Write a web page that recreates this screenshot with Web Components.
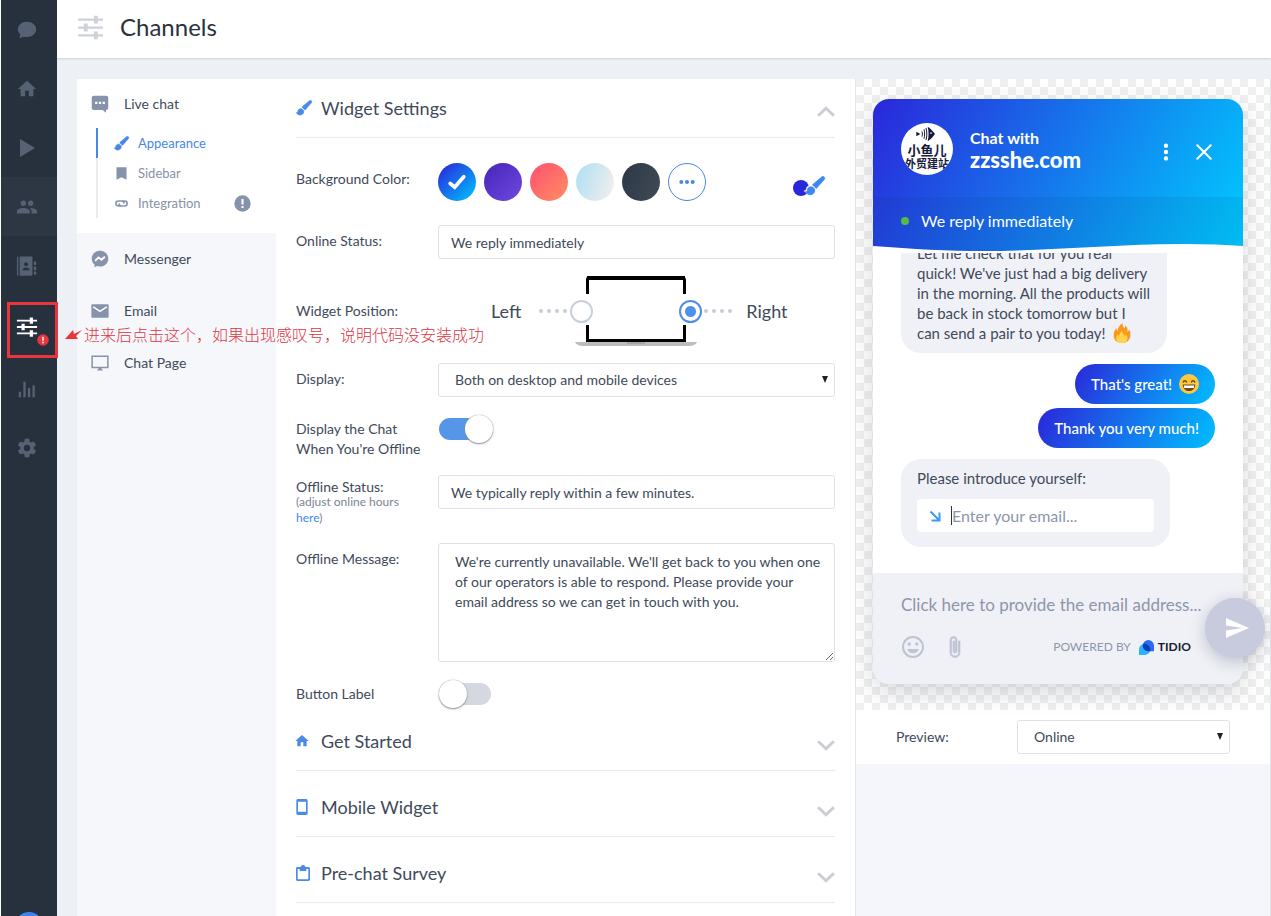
<!DOCTYPE html>
<html lang="en">
<head>
<meta charset="utf-8">
<title>Channels</title>
<style>
  html, body {
    margin: 0;
    height: 100%;
  }
  body {
    font-family: Lato, "Noto Sans CJK SC", sans-serif;
    font-size: 14px;
    line-height: 20px;
    color: #404a5a;
    background: #fff;
    overflow: hidden;
  }
</style>
</head>
<body>
<channels-app></channels-app>

<script>
const ICONS = {
  chat: '<path d="M12 3C6.500 3 2 6.700 2 11.300c0 2.200 1 4.200 2.800 5.700L3.500 21l5-1.700c1.100.3 2.300.4 3.500.4 5.500 0 10-3.700 10-8.400S17.500 3 12 3z"/>',
  home: '<path d="M10 20v-6h4v6h5v-8h3L12 3 2 12h3v8z"/>',
  play: '<path d="M5 3v18l15-9z"/>',
  people: '<path d="M16 11c1.660 0 3-1.340 3-3s-1.340-3-3-3-3 1.340-3 3 1.340 3 3 3zm-8 0c1.660 0 3-1.340 3-3S9.660 5 8 5 5 6.340 5 8s1.340 3 3 3zm0 2c-2.330 0-7 1.170-7 3.500V19h14v-2.500C15 14.170 10.330 13 8 13zm8 0c-.29 0-.62.02-.97.05C16.190 13.890 17 15.020 17 16.500V19h6v-2.500c0-2.330-4.670-3.500-7-3.500z"/>',
  contacts: '<path d="M1 3c0-1 .5-1.500 1.500-1.500V22.500C1.500 22.500 1 22 1 21zM4 1.500h12.500c1 0 1.500.5 1.500 1.500v18c0 1-.5 1.500-1.500 1.500H4zM19.500 7H22v4h-2.500zM19.500 12.500H22v4h-2.500zM19.500 18H22v3.500h-2.500z"/><path fill="var(--hole)" d="M11 8a2.200 2.200 0 1 1 0 4.400A2.200 2.200 0 0 1 11 8zm-4 8.500c0-2 2-3 4-3s4 1 4 3z"/>',
  sliders: '<path d="M1 4h22v2H1zM1 11h22v2H1zM1 18h22v2H1z"/><path d="M15 1.500h3.500v7H15zM6 8.500h3.500v7H6zM15 15.500h3.500v7H15z"/>',
  stats: '<path d="M3 15h2.500v6H3zM8 4h2.500v17H8zM13 11h2.500v10H13zM18 8h2.500v13H18z"/>',
  gear: '<path d="M19.430 12.980c.04-.32.07-.64.07-.98s-.03-.66-.07-.98l2.110-1.650c.19-.15.24-.42.12-.64l-2-3.460c-.12-.22-.39-.3-.61-.22l-2.490 1c-.52-.4-1.080-.73-1.690-.98l-.38-2.650C14.460 2.180 14.250 2 14 2h-4c-.25 0-.46.18-.49.42l-.38 2.650c-.61.25-1.170.59-1.690.98l-2.490-1c-.23-.09-.49 0-.61.22l-2 3.460c-.13.22-.07.49.12.64l2.110 1.650c-.04.32-.07.65-.07.98s.03.66.07.98l-2.110 1.650c-.19.15-.24.42-.12.64l2 3.460c.12.22.39.3.61.22l2.490-1c.52.4 1.080.73 1.690.98l.38 2.650c.03.24.24.42.49.42h4c.25 0 .46-.18.49-.42l.38-2.650c.61-.25 1.170-.59 1.690-.98l2.490 1c.23.09.49 0 .61-.22l2-3.460c.12-.22.07-.49-.12-.64zM12 15.500A3.500 3.500 0 1 1 12 8.500a3.500 3.500 0 0 1 0 7z"/>',
  message: '<path d="M4 1h16c2 0 3 1 3 3v13c0 2-1 3-3 3v3.500L15.500 20H4c-2 0-3-1-3-3V4c0-2 1-3 3-3z"/><path fill="#fff" d="M5.500 9h3v3h-3zM10.500 9h3v3h-3zM15.500 9h3v3h-3z"/>',
  brush: '<path stroke="currentColor" d="M7 13c-2.200 0-3.800 1.500-4 3.500-.1 1.600-1.200 2.500-2.500 2.500 1.200 2 3.300 3.500 5.700 3.500 3.200 0 5.500-2.300 5.500-5.300 0-2.300-2.400-4.200-4.700-4.200zM23 1.200c-.9-.8-2-.7-2.900 0L9 10.500l4.500 4.500L23.200 4c.6-.8.6-2-.2-2.800z"/>',
  bookmark: '<path d="M4 2h16v20l-8-4-8 4z"/>',
  link: '<g fill="none" stroke="currentColor" stroke-width="2.600"><path d="M11 16H7a4 4 0 0 1 0-8h5a4 4 0 0 1 4 4M13 8h4a4 4 0 0 1 0 8h-5a4 4 0 0 1-4-4"/></g>',
  bang: '<circle cx="12" cy="12" r="11.500"/><path fill="#fff" d="M10.500 5.500h3v8h-3zM10.500 15.500h3v3h-3z"/>',
  messenger: '<path d="M12 1C5.700 1 1 5.600 1 11.500c0 3.200 1.400 6 3.700 7.900V23l3.500-1.600c1.200.4 2.500.6 3.800.6 6.300 0 11-4.600 11-10.500S18.300 1 12 1z"/><path fill="none" stroke="#fff" stroke-width="2.500" d="M5.500 14.500l4.500-4.500 4 3 4.500-4"/>',
  mail: '<path d="M2 3h20c1 0 1.500.5 1.500 1.500v15c0 1-.5 1.500-1.500 1.500H2c-1 0-1.500-.5-1.500-1.500v-15C.5 3.500 1 3 2 3z"/><path fill="none" stroke="#fff" stroke-width="2" d="M3 6.500l9 6 9-6"/>',
  monitor: '<path fill="none" stroke="currentColor" stroke-width="2" d="M1.500 3h21v15h-21z"/><path d="M11 18h2l3 4H8z"/>',
  phone: '<path fill-rule="evenodd" d="M6 0h12c1.500 0 2.500 1 2.500 2.500v19c0 1.500-1 2.500-2.500 2.500H6c-1.500 0-2.500-1-2.500-2.500v-19C3.500 1 4.500 0 6 0zm0 4v15h12V4z"/>',
  clipboard: '<path fill-rule="evenodd" d="M20 3h-4.200C15.400 1.200 13.800 0 12 0S8.600 1.200 8.200 3H4C2.500 3 1.500 4 1.500 5.500v16C1.500 23 2.500 24 4 24h16c1.500 0 2.500-1 2.500-2.500v-16C22.500 4 21.500 3 20 3zM4 6h3v3h10V6h3v15.500H4z"/>',
  check: '<path fill="none" stroke="currentColor" stroke-width="5" stroke-linecap="round" d="M3 14l6 5L21 5"/>',
  dots: '<circle cx="3.500" cy="12" r="3"/><circle cx="12" cy="12" r="3"/><circle cx="20.500" cy="12" r="3"/>',
  more: '<circle cx="12" cy="3.500" r="2.900"/><circle cx="12" cy="12" r="2.900"/><circle cx="12" cy="20.500" r="2.900"/>',
  close: '<path fill="none" stroke="currentColor" stroke-width="2.800" stroke-linecap="round" d="M3 3l18 18M21 3L3 21"/>',
  up: '<path fill="none" stroke="currentColor" stroke-width="4" d="M1.500 17L12 7l10.500 10"/>',
  down: '<path fill="none" stroke="currentColor" stroke-width="4" d="M1.500 7L12 17 22.500 7"/>',
  corner: '<path fill="none" stroke="currentColor" stroke-width="4" d="M3 3l17 17M21 5v16H5"/>',
  smile: '<path d="M12 1C5.900 1 1 5.900 1 12s4.900 11 11 11 11-4.900 11-11S18.100 1 12 1zm0 20a9 9 0 1 1 0-18 9 9 0 0 1 0 18z"/><circle cx="8.200" cy="9" r="1.700"/><circle cx="15.800" cy="9" r="1.700"/><path d="M6 14c1 2.800 3.200 4.300 6 4.300s5-1.500 6-4.300z"/>',
  clip: '<path stroke="currentColor" stroke-width=".7" d="M17 6v11.500a5 5 0 0 1-10 0V5a3.500 3.500 0 0 1 7 0v11a2 2 0 0 1-4 0V6h1.500v10a.6.600 0 0 0 1 0V5a2 2 0 0 0-4 0v12.500a3.500 3.500 0 0 0 7 0V6z"/>',
  send: '<path d="M1 2l23 10L1 22v-7.500L17 12 1 9.500z"/>',
  tidio: '<path fill="#2bb3ff" d="M0 24V15a9 9 0 0 1 18 0 9 9 0 0 1-9 9z"/><path fill="#2f6bf0" d="M6 9a9 9 0 0 1 18 0v9h-9a9 9 0 0 1-9-9z"/><path fill="#0a3fc0" d="M6.500 6.400A9 9 0 0 1 18 15v3h-3A9 9 0 0 1 6.500 6.400z"/>',
  fire: '<path fill="#f79a1c" d="M12 24C6 24 2 20.500 2 15c0-4 1.500-7 3-9 .2 2 .8 3 1.800 3.500C7 6 9 2.500 12.500 0c-.3 3 1.200 4.500 2.500 6.500.6-.8.8-2 .5-3.500C19 5 19 8 18.500 10.500c1.200-.6 1.800-1.500 2-3C22 10 22.500 13 22 16c-.8 5-4.500 8-10 8z"/><path fill="#ffd34d" d="M12 24c-4 0-7-2-7-6 0-2 .8-3.500 2-4.500.2 1 .6 1.700 1.500 2 .2-2.500 1.500-4.500 3.500-6 0 2.500 2.500 3.500 3 6 .8-.4 1.200-1 1.500-2 1.300 1.200 2 2.600 2 4.500 0 4-2.800 6-6.500 6z"/>',
  grin: '<circle cx="12" cy="12" r="12" fill="#ffc83d"/><path fill="none" stroke="#6a4a1e" stroke-width="1.800" stroke-linecap="round" d="M5 9.500c.7-2 3.300-2 4 0M15 9.500c.7-2 3.300-2 4 0"/><path fill="#6a4a1e" d="M4.500 12.500h15c0 4.500-3.300 8-7.500 8s-7.500-3.500-7.500-8z"/><path fill="#fff" d="M6 13.800h12v3H6z"/>',
  fish: '<path d="M13 1c3.500 2 7.500 6 11 11-3.500 5-7.500 9-11 11 1.800-7 1.800-15 0-22z"/><circle cx="18" cy="10.500" r="1.300" fill="#fff"/><path fill="none" stroke="currentColor" stroke-width="1.500" d="M10.500 3c1.700 6 1.700 12 0 18M7.500 5c1.300 5 1.300 9 0 14M4.500 8c.8 3 .8 5 0 8"/><path d="M-4 8.500L2 12l-6 3.500z"/>'
};

// draws one glyph out of ICONS, sized with --size
class UiIcon extends HTMLElement {
  constructor() {
    super();
    this.attachShadow({ mode: "open" });
  }

  connectedCallback() {
    this.shadowRoot.innerHTML = `
      <style>
        :host {
          display: inline-flex;
          flex: none;
          width: var(--size, 18px);
          height: var(--size, 18px);
        }
        svg { width: 100%; height: 100%; overflow: visible; }
      </style>
      <svg viewBox="0 0 24 24" fill="currentColor" aria-hidden="true">${ICONS[this.getAttribute("name")]}</svg>`;
  }
}

class AppRail extends HTMLElement {
  constructor() {
    super();
    this.attachShadow({ mode: "open" });
  }

  connectedCallback() {
    const items = [
      ["chat", "Chat"],
      ["home", "Home"],
      ["play", "Automation"],
      ["people", "Visitors"],
      ["contacts", "Contacts"],
      ["sliders", "Channels"],
      ["stats", "Analytics"],
      ["gear", "Settings"],
    ];
    this.shadowRoot.innerHTML = `
      <style>
        :host {
          position: relative;
          z-index: 1;
          display: flex;
          flex-direction: column;
          align-items: center;
          width: 56px;
          margin-left: 1px;
          background: #27313e;
          color: #566273;
          --hole: #27313e;
        }
        a {
          display: flex;
          flex: none;
          align-items: center;
          justify-content: center;
          width: 100%;
          height: 59px;
          box-sizing: border-box;
          padding-right: 5px;
          color: inherit;
          --size: 22px;
        }
        a.play { --size: 24px; }
        a.people { background: #2d3744; }
        a.sliders {
          position: relative;
          height: 64px;
          color: #fff;
        }
        .alert {
          position: absolute;
          left: 36px;
          top: 39px;
          color: #e8363c;
          --size: 12px;
        }
        .me {
          width: 28px;
          height: 28px;
          margin: auto 0 -24px;
          border: 0;
          border-radius: 50%;
          background: #3d84f0;
          flex: none;
        }
      </style>
      ${items
        .map(
          ([icon, label]) =>
            `<a href="#${icon}" class="${icon}" aria-label="${label}"><ui-icon name="${icon}"></ui-icon>${
              icon === "sliders" ? '<ui-icon class="alert" name="bang"></ui-icon>' : ""
            }</a>`,
        )
        .join("")}
      <button class="me" aria-label="Account"></button>`;
  }
}

class PageHeader extends HTMLElement {
  constructor() {
    super();
    this.attachShadow({ mode: "open" });
    this.shadowRoot.innerHTML = `
      <style>
        :host {
          display: flex;
          align-items: center;
          gap: 16px;
          height: 58px;
          box-sizing: border-box;
          padding: 0 20px 4px;
          background: #fff;
          box-shadow: 0 1px 2px #ccd1d9;
          color: #2b323c;
        }
        ui-icon { color: #cdd1d8; --size: 27px; }
        h1 { margin: 0; font-size: 24px; line-height: 30px; font-weight: 400; }
      </style>
      <ui-icon name="sliders"></ui-icon>
      <h1><slot></slot></h1>`;
  }
}

class ChannelNav extends HTMLElement {
  constructor() {
    super();
    this.attachShadow({ mode: "open" });
    this.shadowRoot.innerHTML = `
      <style>
        :host {
          display: block;
          background: #f5f7fb;
        }
        a {
          display: flex;
          align-items: center;
          gap: 15px;
          height: 52px;
          padding-left: 14px;
          color: #404a5a;
          text-decoration: none;
        }
        a > ui-icon { color: #8792ab; }
        .group { background: #fff; padding-bottom: 15px; }
        .group > a { height: 49px; }
        .sub { margin-left: 19px; }
        .sub a {
          height: 30px;
          gap: 9px;
          padding: 0 25px 0 16px;
          border-left: 2px solid #e9ebef;
          color: #8792a6;
          font-size: 13px;
          --size: 15px;
        }
        .sub a.on { border-color: #4a86e8; color: #4a86e8; }
        .sub a.on ui-icon { color: inherit; }
        .sub .warn { margin-left: auto; --size: 17px; }
      </style>
      <div class="group">
        <a href="#live"><ui-icon name="message"></ui-icon>Live chat</a>
        <div class="sub">
          <a class="on" href="#appearance"><ui-icon name="brush"></ui-icon>Appearance</a>
          <a href="#sidebar"><ui-icon name="bookmark"></ui-icon>Sidebar</a>
          <a href="#integration"><ui-icon name="link"></ui-icon>Integration<ui-icon class="warn" name="bang"></ui-icon></a>
        </div>
      </div>
      <a href="#messenger"><ui-icon name="messenger"></ui-icon>Messenger</a>
      <a href="#email"><ui-icon name="mail"></ui-icon>Email</a>
      <a href="#page"><ui-icon name="monitor"></ui-icon>Chat Page</a>`;
  }
}

class SettingsSection extends HTMLElement {
  constructor() {
    super();
    this.attachShadow({ mode: "open" });
  }

  connectedCallback() {
    const open = this.hasAttribute("open");
    this.shadowRoot.innerHTML = `
      <style>
        :host { display: block; margin-bottom: 7px; }
        :host([open]) { margin-bottom: 0; }
        h2 { margin: 0; font: inherit; }
        button {
          display: flex;
          align-items: center;
          width: 100%;
          height: 59px;
          padding: 0;
          border: 0;
          border-bottom: 1px solid #e9eaed;
          background: none;
          color: #404a5a;
          font: inherit;
          font-size: 18px;
          text-align: left;
        }
        .icon { margin-right: 9px; color: #4a8ae8; --size: 16px; }
        .icon[name="home"], .icon[name="phone"] { margin: 0 11px 0 -2px; }
        .icon[name="clipboard"] { margin: 0 10px 0 -1px; }
        .arrow { margin: 7px 0 0 auto; color: #cbcdd4; --size: 18px; }
      </style>
      <h2><button aria-expanded="${open}">
        <ui-icon class="icon" name="${this.getAttribute("icon")}"></ui-icon>
        ${this.getAttribute("heading")}
        <ui-icon class="arrow" name="${open ? "up" : "down"}"></ui-icon>
      </button></h2>
      <slot></slot>`;
  }
}

class FormRow extends HTMLElement {
  constructor() {
    super();
    this.attachShadow({ mode: "open" });
    this.shadowRoot.innerHTML = `
      <style>
        :host {
          display: grid;
          grid-template-columns: 126px minmax(0, 1fr);
          column-gap: 16px;
          align-items: start;
        }
        :host([center]) { align-items: center; }
        .label { padding-top: 6px; }
        :host([center]) .label { padding: 0; }
        :host([hint]) .label { padding-top: 2px; }
      </style>
      <div class="label"><slot name="label"></slot></div>
      <slot></slot>`;
  }
}

const FIELD_CSS = `
  input[type="text"], textarea, select {
    box-sizing: border-box;
    width: 100%;
    margin: 0;
    border: 1px solid #dfe1e6;
    border-radius: 3px;
    background: #fff;
    color: #404a5a;
    font: inherit;
  }
  input[type="text"] { height: 34px; padding: 0 12px; }
  select { height: 34px; padding: 0 16px; appearance: none; }
  .select { display: grid; align-items: center; }
  .select > * { grid-area: 1 / 1; }
  .select svg { justify-self: end; margin-right: 6px; pointer-events: none; }`;

class WidgetSettings extends HTMLElement {
  constructor() {
    super();
    this.attachShadow({ mode: "open" });
  }

  connectedCallback() {
    const colors = [
      ["Blue", "linear-gradient(135deg, #2a27da 5%, #00bfff 95%)"],
      ["Purple", "linear-gradient(135deg, #4425b8, #7048e0)"],
      ["Coral", "linear-gradient(135deg, #ff4f72, #ff8f60)"],
      ["Light", "linear-gradient(110deg, #abdff5, #f6efed)"],
      ["Dark", "linear-gradient(110deg, #2c3846, #414b57)"],
    ];
    this.shadowRoot.innerHTML = `
      <style>
        :host { display: block; padding: 0 20px; background: #fff; }
        ${FIELD_CSS}
        .body {
          display: flex;
          flex-direction: column;
          gap: 16px;
          padding-top: 25px;
        }
        .colors {
          display: flex;
          align-items: center;
          gap: 8px;
          padding-bottom: 8px;
        }
        .colors button {
          width: 38px;
          height: 38px;
          padding: 0;
          border: 0;
          border-radius: 50%;
          color: #fff;
          display: flex;
          align-items: center;
          justify-content: center;
        }
        .colors .more { border: 1px solid #4a86e8; background: none; color: #4a86e8; --size: 16px; }
        .colors .custom {
          width: auto;
          height: 22px;
          margin: 8px 10px 0 auto;
          border-radius: 0;
          background: none;
          color: #3f87f0;
          --size: 20px;
        }
        .custom::before {
          content: "";
          width: 16px;
          height: 16px;
          margin: 3px -4px 0 0;
          border-radius: 50%;
          background: #2a27da;
        }
        .custom ui-icon { filter: drop-shadow(-1px -1px 0 #fff); }
        .position {
          display: flex;
          align-items: center;
          height: 72px;
          padding-left: 53px;
          font-size: 18px;
        }
        .position label { display: flex; align-items: center; }
        .position label svg { margin: 0 3px 0 18px; }
        .position label:last-child svg { margin: 0 14px 0 2px; }
        .laptop { margin: 0 -18px; }
        input[type="radio"] {
          appearance: none;
          position: relative;
          z-index: 1;
          width: 23px;
          height: 23px;
          margin: 0;
          border: 2px solid #c9cfd8;
          border-radius: 50%;
          background: #fff;
        }
        input[type="radio"]:checked {
          border-color: #4f8ce8;
          background: radial-gradient(circle, #4f90ea 5px, #fff 6px);
        }
        .switch {
          appearance: none;
          display: flex;
          align-items: center;
          width: 52px;
          height: 22px;
          margin: 5px 0 5px 1px;
          border-radius: 11px;
          background: #d5d8e1;
        }
        .switch::before {
          content: "";
          width: 28px;
          height: 28px;
          border-radius: 50%;
          background: #fff;
          box-shadow: 0 1px 2px #888c96, 0 0 1px #888c96;
          flex: none;
        }
        .switch:checked { background: #5596e8; }
        .switch:checked::before { margin-left: 26px; }
        textarea {
          display: block;
          height: 119px;
          padding: 8px 10px 8px 16px;
        }
        small { display: block; font-size: 12px; line-height: 16px; color: #7b8494; margin: -3px 0 1px; }
        small a { color: #3f87f0; text-decoration: none; }
        .last { height: 34px; }
      </style>
      <settings-section open icon="brush" heading="Widget Settings">
        <div class="body">
          <form-row>
            <span slot="label">Background Color:</span>
            <div class="colors">
              ${colors
                .map(
                  ([name, fill], i) =>
                    `<button aria-label="${name}" style="background: ${fill}">${i ? "" : '<ui-icon name="check"></ui-icon>'}</button>`,
                )
                .join("")}
              <button class="more" aria-label="More colors"><ui-icon name="dots"></ui-icon></button>
              <button class="custom" aria-label="Custom color"><ui-icon name="brush"></ui-icon></button>
            </div>
          </form-row>
          <form-row>
            <label slot="label" for="online">Online Status:</label>
            <input id="online" type="text" value="We reply immediately">
          </form-row>
          <form-row center>
            <span slot="label">Widget Position:</span>
            <div class="position">
              <label>Left
                <svg width="28" height="4" fill="#c9cdd6"><circle cx="2" cy="2" r="2"/><circle cx="10" cy="2" r="2"/><circle cx="18" cy="2" r="2"/><circle cx="26" cy="2" r="2"/></svg>
                <input type="radio" name="side">
              </label>
              <svg class="laptop" width="122" height="72" aria-hidden="true">
                <path d="M12.500 19V4.500Q12.500 3 14 3H107Q109.500 3 109.500 5V19M12.500 50V65.500H109.500V50" fill="none" stroke="#000" stroke-width="3"/>
                <path d="M12 3H110" stroke="#000" stroke-width="4"/>
                <path d="M0 67H122Q120 71 114 71H8Q2 71 0 67Z" fill="#bcbcbe"/>
                <path d="M52 67H70V69H52Z" fill="#a4a4a7"/>
              </svg>
              <label><input type="radio" name="side" checked>
                <svg width="28" height="4" fill="#c9cdd6"><circle cx="2" cy="2" r="2"/><circle cx="10" cy="2" r="2"/><circle cx="18" cy="2" r="2"/><circle cx="26" cy="2" r="2"/></svg>
                Right</label>
            </div>
          </form-row>
          <form-row>
            <label slot="label" for="display">Display:</label>
            <div class="select">
              <select id="display"><option>Both on desktop and mobile devices</option></select>
              <svg width="8" height="8"><path d="M1 0h6L4 7z" fill="#222"/></svg>
            </div>
          </form-row>
          <form-row>
            <label slot="label" for="offline">Display the Chat<br>When You're Offline</label>
            <input id="offline" class="switch" type="checkbox" checked>
          </form-row>
          <form-row hint>
            <div slot="label"><label for="status">Offline Status:</label>
              <small>(adjust online hours <a href="#hours">here</a>)</small></div>
            <input id="status" type="text" value="We typically reply within a few minutes.">
          </form-row>
          <form-row>
            <label slot="label" for="message">Offline Message:</label>
            <textarea id="message">We're currently unavailable. We'll get back to you when one of our operators is able to respond. Please provide your email address so we can get in touch with you.</textarea>
          </form-row>
          <form-row class="last">
            <label slot="label" for="button">Button Label</label>
            <input id="button" class="switch" type="checkbox">
          </form-row>
        </div>
      </settings-section>
      <settings-section icon="home" heading="Get Started"></settings-section>
      <settings-section icon="phone" heading="Mobile Widget"></settings-section>
      <settings-section icon="clipboard" heading="Pre-chat Survey"></settings-section>`;
  }
}

class ChatBubble extends HTMLElement {
  constructor() {
    super();
    this.attachShadow({ mode: "open" });
    this.shadowRoot.innerHTML = `
      <style>
        :host {
          display: block;
          box-sizing: border-box;
          align-self: flex-start;
          max-width: 266px;
          margin-bottom: 11px;
          padding: 10px 16px;
          border-radius: 20px;
          background: #f0f1f7;
          --size: 20px;
        }
        :host([mine]) {
          align-self: flex-end;
          margin-bottom: 4px;
          background: linear-gradient(120deg, #2a27da, #00bfff);
          color: #fff;
          font-weight: 500;
        }
        :host([last]) { margin-bottom: 11px; }
      </style>
      <slot></slot>`;
  }
}

class ChatPreview extends HTMLElement {
  constructor() {
    super();
    this.attachShadow({ mode: "open" });
    this.shadowRoot.innerHTML = `
      <style>
        :host {
          display: block;
          position: relative;
          font-size: 15px;
          border-radius: 16px;
          background: #fff;
          box-shadow: 0 8px 24px rgba(0, 18, 46, .16);
        }
        header {
          position: relative;
          height: 154px;
          border-radius: 16px 16px 0 0;
          overflow: hidden;
          background: linear-gradient(120deg, #2a27da, #00ccff);
          color: #fff;
          font-weight: 700;
        }
        .top {
          display: flex;
          align-items: center;
          height: 98px;
          box-sizing: border-box;
          padding: 2px 30px 0 28px;
        }
        .logo {
          display: flex;
          flex-direction: column;
          align-items: center;
          width: 52px;
          height: 52px;
          box-sizing: border-box;
          padding-top: 3px;
          margin-right: 17px;
          border-radius: 50%;
          overflow: hidden;
          background: #fff;
          color: #15183a;
          font: 700 13px/15px "Noto Sans CJK SC", sans-serif;
          --size: 16px;
        }
        .logo span { white-space: nowrap; }
        .logo span:last-child { font-size: 11px; line-height: 13px; }
        .title { flex: 1; line-height: 22px; font-size: 16px; }
        .title strong { display: block; font-size: 22px; }
        .top button {
          display: flex;
          padding: 0;
          border: 0;
          background: none;
          color: #fff;
          margin: 6px 0 0 20px;
          --size: 18px;
        }
        .status {
          display: flex;
          align-items: center;
          gap: 12px;
          height: 56px;
          box-sizing: border-box;
          padding: 0 28px 8px;
          background: rgba(0, 36, 92, .08);
          font-size: 16px;
          font-weight: 400;
        }
        .status::before {
          content: "";
          width: 8px;
          height: 8px;
          border-radius: 50%;
          background: #58b947;
        }
        .wave { position: absolute; left: 0; bottom: 0; width: 100%; height: 10px; }
        .log {
          display: flex;
          flex-direction: column;
          justify-content: flex-end;
          height: 320px;
          box-sizing: border-box;
          padding: 0 28px 15px;
          overflow: hidden;
        }
        .log chat-bubble ui-icon { vertical-align: top; }
        .log chat-bubble > ui-icon { margin-left: 3px; }
        .ask { width: 269px; max-width: 100%; padding: 9px 16px 15px; }
        .ask label { display: block; margin-bottom: 11px; }
        .box {
          display: flex;
          align-items: center;
          gap: 10px;
          height: 33px;
          padding: 0 12px;
          border-radius: 4px;
          background: #fff;
          color: #3d9bf0;
          --size: 12px;
        }
        input {
          min-width: 0;
          flex: 1;
          padding: 0;
          border: 0;
          background: none;
          font: inherit;
          font-size: 16px;
          outline: 0;
        }
        .box input { height: 19px; border-left: 1px solid #26324a; }
        input::placeholder { color: #8d96aa; opacity: 1; }
        footer {
          display: flex;
          flex-direction: column;
          height: 111px;
          box-sizing: border-box;
          padding: 17px 38px 20px 28px;
          border-radius: 0 0 16px 16px;
          background: #f0f1f7;
        }
        footer input { flex: none; height: 28px; font-size: 17px; }
        .tools {
          display: flex;
          align-items: center;
          gap: 18px;
          margin-top: 17px;
        }
        .tools button {
          display: flex;
          padding: 0;
          border: 0;
          background: none;
          color: #bfc3d3;
          --size: 24px;
        }
        .tools a {
          display: flex;
          align-items: center;
          gap: 4px;
          margin: 0 14px 0 auto;
          color: #8d96aa;
          text-decoration: none;
          font-size: 12px;
          --size: 15px;
        }
        .tools strong { color: #14202e; font-weight: 700; }
        .tools span { margin-right: 4px; }
        .send {
          position: absolute;
          right: -22px;
          bottom: 26px;
          display: flex;
          align-items: center;
          justify-content: center;
          width: 60px;
          height: 60px;
          padding: 0 0 0 4px;
          border: 0;
          border-radius: 50%;
          background: #c7cbdd;
          color: #fff;
          box-shadow: 0 4px 16px rgba(0, 18, 46, .22);
          --size: 24px;
        }
      </style>
      <header>
        <div class="top">
          <div class="logo"><ui-icon name="fish"></ui-icon><span>小鱼儿</span><span>外贸建站</span></div>
          <div class="title">Chat with<strong>zzsshe.com</strong></div>
          <button aria-label="Options"><ui-icon name="more"></ui-icon></button>
          <button aria-label="Close"><ui-icon name="close"></ui-icon></button>
        </div>
        <div class="status">We reply immediately</div>
        <svg class="wave" viewBox="0 0 370 10" preserveAspectRatio="none" fill="#fff"><path d="M0 3C40 6 75 8 110 8C180 8 240 1 310 1Q345 1 370 3V10H0z"/></svg>
      </header>
      <div class="log">
        <chat-bubble>Let me check that for you real quick! We've just had a big delivery in the morning. All the products will be back in stock tomorrow but I can send a pair to you today! <ui-icon name="fire"></ui-icon></chat-bubble>
        <chat-bubble mine>That's great! <ui-icon name="grin"></ui-icon></chat-bubble>
        <chat-bubble mine last>Thank you very much!</chat-bubble>
        <chat-bubble class="ask">
          <label for="email">Please introduce yourself:</label>
          <div class="box"><ui-icon name="corner"></ui-icon><input id="email" type="email" placeholder="Enter your email..."></div>
        </chat-bubble>
      </div>
      <footer>
        <input type="text" aria-label="Message" placeholder="Click here to provide the email address...">
        <div class="tools">
          <button aria-label="Emoji"><ui-icon name="smile"></ui-icon></button>
          <button aria-label="Attach file"><ui-icon name="clip"></ui-icon></button>
          <a href="#tidio"><span>POWERED BY</span><ui-icon name="tidio"></ui-icon><strong>TIDIO</strong></a>
        </div>
      </footer>
      <button class="send" aria-label="Send"><ui-icon name="send"></ui-icon></button>`;
  }
}

class PreviewPanel extends HTMLElement {
  constructor() {
    super();
    this.attachShadow({ mode: "open" });
    this.shadowRoot.innerHTML = `
      <style>
        :host {
          display: block;
          border: 1px solid #e4e6ea;
          border-width: 0 1px;
          background: #f5f6fb;
        }
        ${FIELD_CSS}
        .stage {
          padding: 20px 27px 26px 17px;
          background: repeating-conic-gradient(#fff 0 25%, #f0f0f0 0 50%) 0 0 / 16px 16px;
        }
        .mode {
          display: flex;
          align-items: center;
          justify-content: space-between;
          padding: 10px 40px;
          background: #fff;
        }
        .select { width: 213px; }
      </style>
      <div class="stage"><chat-preview></chat-preview></div>
      <div class="mode">
        <label for="mode">Preview:</label>
        <div class="select">
          <select id="mode"><option>Online</option></select>
          <svg width="8" height="8"><path d="M1 0h6L4 7z" fill="#222"/></svg>
        </div>
      </div>`;
  }
}

// red box, arrow and remark laid over the page
class PageNote extends HTMLElement {
  constructor() {
    super();
    this.attachShadow({ mode: "open" });
    this.shadowRoot.innerHTML = `
      <style>
        :host {
          position: absolute;
          z-index: 2;
          left: 7px;
          top: 302px;
          display: flex;
          align-items: center;
          color: #dc3545;
          font: 300 16px/20px "Noto Sans CJK SC", sans-serif;
          white-space: nowrap;
          pointer-events: none;
        }
        .frame { width: 45px; height: 50px; border: 3px solid #e8363c; }
        svg { margin: 10px 2px 0 7px; }
        span { padding-top: 7px; }
      </style>
      <div class="frame"></div>
      <svg width="17" height="12" fill="#e8363c"><path d="M0 10L8 1l1 4 8-4-6 6 2 3z"/></svg>
      <span><slot></slot></span>`;
  }
}

class ChannelsApp extends HTMLElement {
  constructor() {
    super();
    this.attachShadow({ mode: "open" });
    this.shadowRoot.innerHTML = `
      <style>
        :host {
          display: grid;
          grid-template-columns: 57px minmax(0, 1fr);
          height: 100vh;
          overflow: hidden;
        }
        .page {
          display: flex;
          flex-direction: column;
          min-height: 0;
          background: #edf1f5;
        }
        page-header { flex: none; }
        main {
          flex: 1;
          min-height: 0;
          display: grid;
          grid-template-columns: 199px minmax(0, 1fr) 416px;
          margin: 21px 0 0 20px;
          overflow: hidden;
        }
      </style>
      <app-rail></app-rail>
      <div class="page">
        <page-header>Channels</page-header>
        <main>
          <channel-nav></channel-nav>
          <widget-settings></widget-settings>
          <preview-panel></preview-panel>
        </main>
      </div>
      <page-note>进来后点击这个，如果出现感叹号，说明代码没安装成功</page-note>`;
  }
}

customElements.define("ui-icon", UiIcon);
customElements.define("app-rail", AppRail);
customElements.define("page-header", PageHeader);
customElements.define("channel-nav", ChannelNav);
customElements.define("settings-section", SettingsSection);
customElements.define("form-row", FormRow);
customElements.define("widget-settings", WidgetSettings);
customElements.define("chat-bubble", ChatBubble);
customElements.define("chat-preview", ChatPreview);
customElements.define("preview-panel", PreviewPanel);
customElements.define("page-note", PageNote);
customElements.define("channels-app", ChannelsApp);
</script>
</body>
</html>
